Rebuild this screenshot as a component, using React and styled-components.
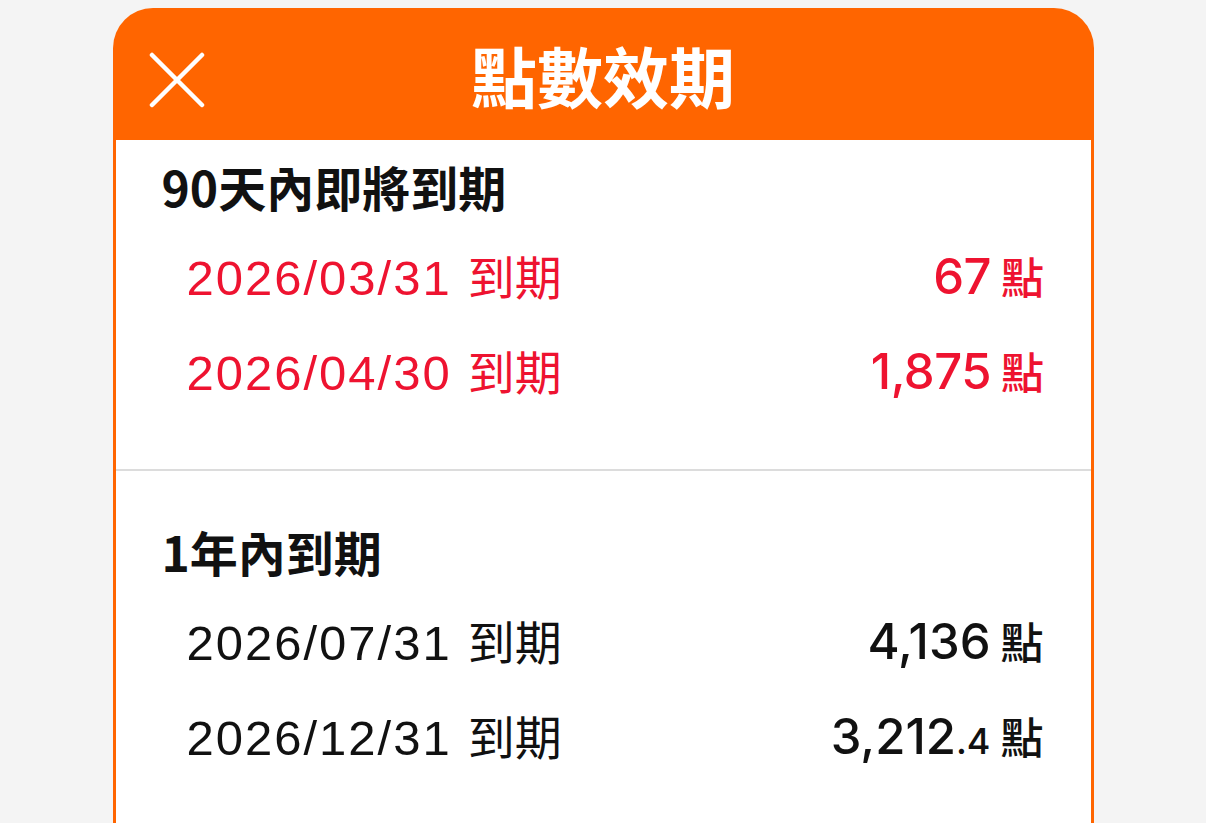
import React from "react";
import styled, { createGlobalStyle } from "styled-components";

const colors = {
  orange: "#ff6500",
  red: "#ee1330",
  text: "#111111",
  page: "#f4f4f4",
  divider: "#dcdcdc",
};

const GlobalStyle = createGlobalStyle`
  html, body {
    margin: 0;
    padding: 0;
    background: ${colors.page};
    overflow: hidden;
  }
  body {
    font-family: "Inter", "Noto Sans CJK TC", sans-serif;
  }
`;

const Page = styled.div`
  display: flex;
  justify-content: center;
  height: 823px;
  padding-top: 8px;
  box-sizing: border-box;
`;

const Modal = styled.div`
  width: 981px;
  display: flex;
  flex-direction: column;
  border-radius: 40px 40px 0 0;
  overflow: hidden;
  background: ${colors.orange};
`;

const Header = styled.div`
  height: 132px;
  flex-shrink: 0;
  display: grid;
  grid-template-columns: 120px 1fr 120px;
  align-items: center;
`;

const CloseButton = styled.button`
  border: none;
  background: none;
  padding: 0;
  margin: 12px 0 0 36px;
  width: 56px;
  height: 56px;
  display: flex;
  align-items: center;
  justify-content: center;
  cursor: pointer;
`;

const Title = styled.h1`
  margin: 0;
  text-align: center;
  color: #ffffff;
  font-family: "Noto Sans CJK TC", sans-serif;
  font-size: 66px;
  font-weight: 700;
  letter-spacing: 0;
`;

const Body = styled.div`
  flex: 1;
  margin: 0 3px;
  background: #ffffff;
`;

const Section = styled.section`
  padding: ${(p) => p.pad};
  border-bottom: ${(p) => (p.divided ? `2px solid ${colors.divider}` : "none")};
`;

const SectionTitle = styled.h2`
  margin: 0 0 9px 46px;
  height: 64px;
  display: flex;
  align-items: center;
  color: ${colors.text};
  font-family: "Noto Sans CJK TC", sans-serif;
  font-size: 48px;
  font-weight: 700;
`;

const Row = styled.div`
  display: flex;
  align-items: center;
  justify-content: space-between;
  height: 95px;
  padding: 0 47px 0 71px;
  color: ${(p) => (p.urgent ? colors.red : colors.text)};
`;

const DateText = styled.span`
  font-family: "Liberation Sans", "Noto Sans CJK TC", sans-serif;
  font-size: 49px;
  letter-spacing: 2px;

  & b {
    font-family: "Noto Sans CJK TC", sans-serif;
    font-weight: 400;
    font-size: 47px;
    letter-spacing: 0;
    margin-left: 16px;
  }
`;

const Amount = styled.span`
  display: flex;
  align-items: baseline;
  font-family: "Inter", sans-serif;
  font-size: 49px;
  font-weight: 500;
  letter-spacing: ${(p) => (p.urgent ? "-0.5px" : "0")};
`;

const Fraction = styled.span`
  font-size: 36px;
`;

const Unit = styled.span`
  font-family: "Noto Sans CJK TC", sans-serif;
  font-size: 43px;
  font-weight: 500;
  margin-left: 10px;
`;

const CloseIcon = () => (
  <svg width="56" height="56" viewBox="0 0 56 56">
    <path
      d="M3 3 L53 53 M53 3 L3 53"
      stroke="#ffffff"
      strokeWidth="4.5"
      strokeLinecap="round"
    />
  </svg>
);

const groups = [
  {
    title: "90天內即將到期",
    urgent: true,
    pad: "14px 0 52px",
    rows: [
      { date: "2026/03/31", points: "67" },
      { date: "2026/04/30", points: "1,875" },
    ],
  },
  {
    title: "1年內到期",
    urgent: false,
    pad: "48px 0 40px",
    rows: [
      { date: "2026/07/31", points: "4,136" },
      { date: "2026/12/31", points: "3,212", fraction: ".4" },
    ],
  },
];

const App = () => (
  <>
    <GlobalStyle />
    <Page>
      <Modal>
        <Header>
          <CloseButton aria-label="close">
            <CloseIcon />
          </CloseButton>
          <Title>點數效期</Title>
          <div />
        </Header>
        <Body>
          {groups.map((g, i) => (
            <Section key={g.title} pad={g.pad} divided={i === 0}>
              <SectionTitle>{g.title}</SectionTitle>
              {g.rows.map((r) => (
                <Row key={r.date} urgent={g.urgent}>
                  <DateText>
                    {r.date}
                    <b>到期</b>
                  </DateText>
                  <Amount urgent={g.urgent}>
                    {r.points}
                    {r.fraction && <Fraction>{r.fraction}</Fraction>}
                    <Unit>點</Unit>
                  </Amount>
                </Row>
              ))}
            </Section>
          ))}
        </Body>
      </Modal>
    </Page>
  </>
);

export default App;
